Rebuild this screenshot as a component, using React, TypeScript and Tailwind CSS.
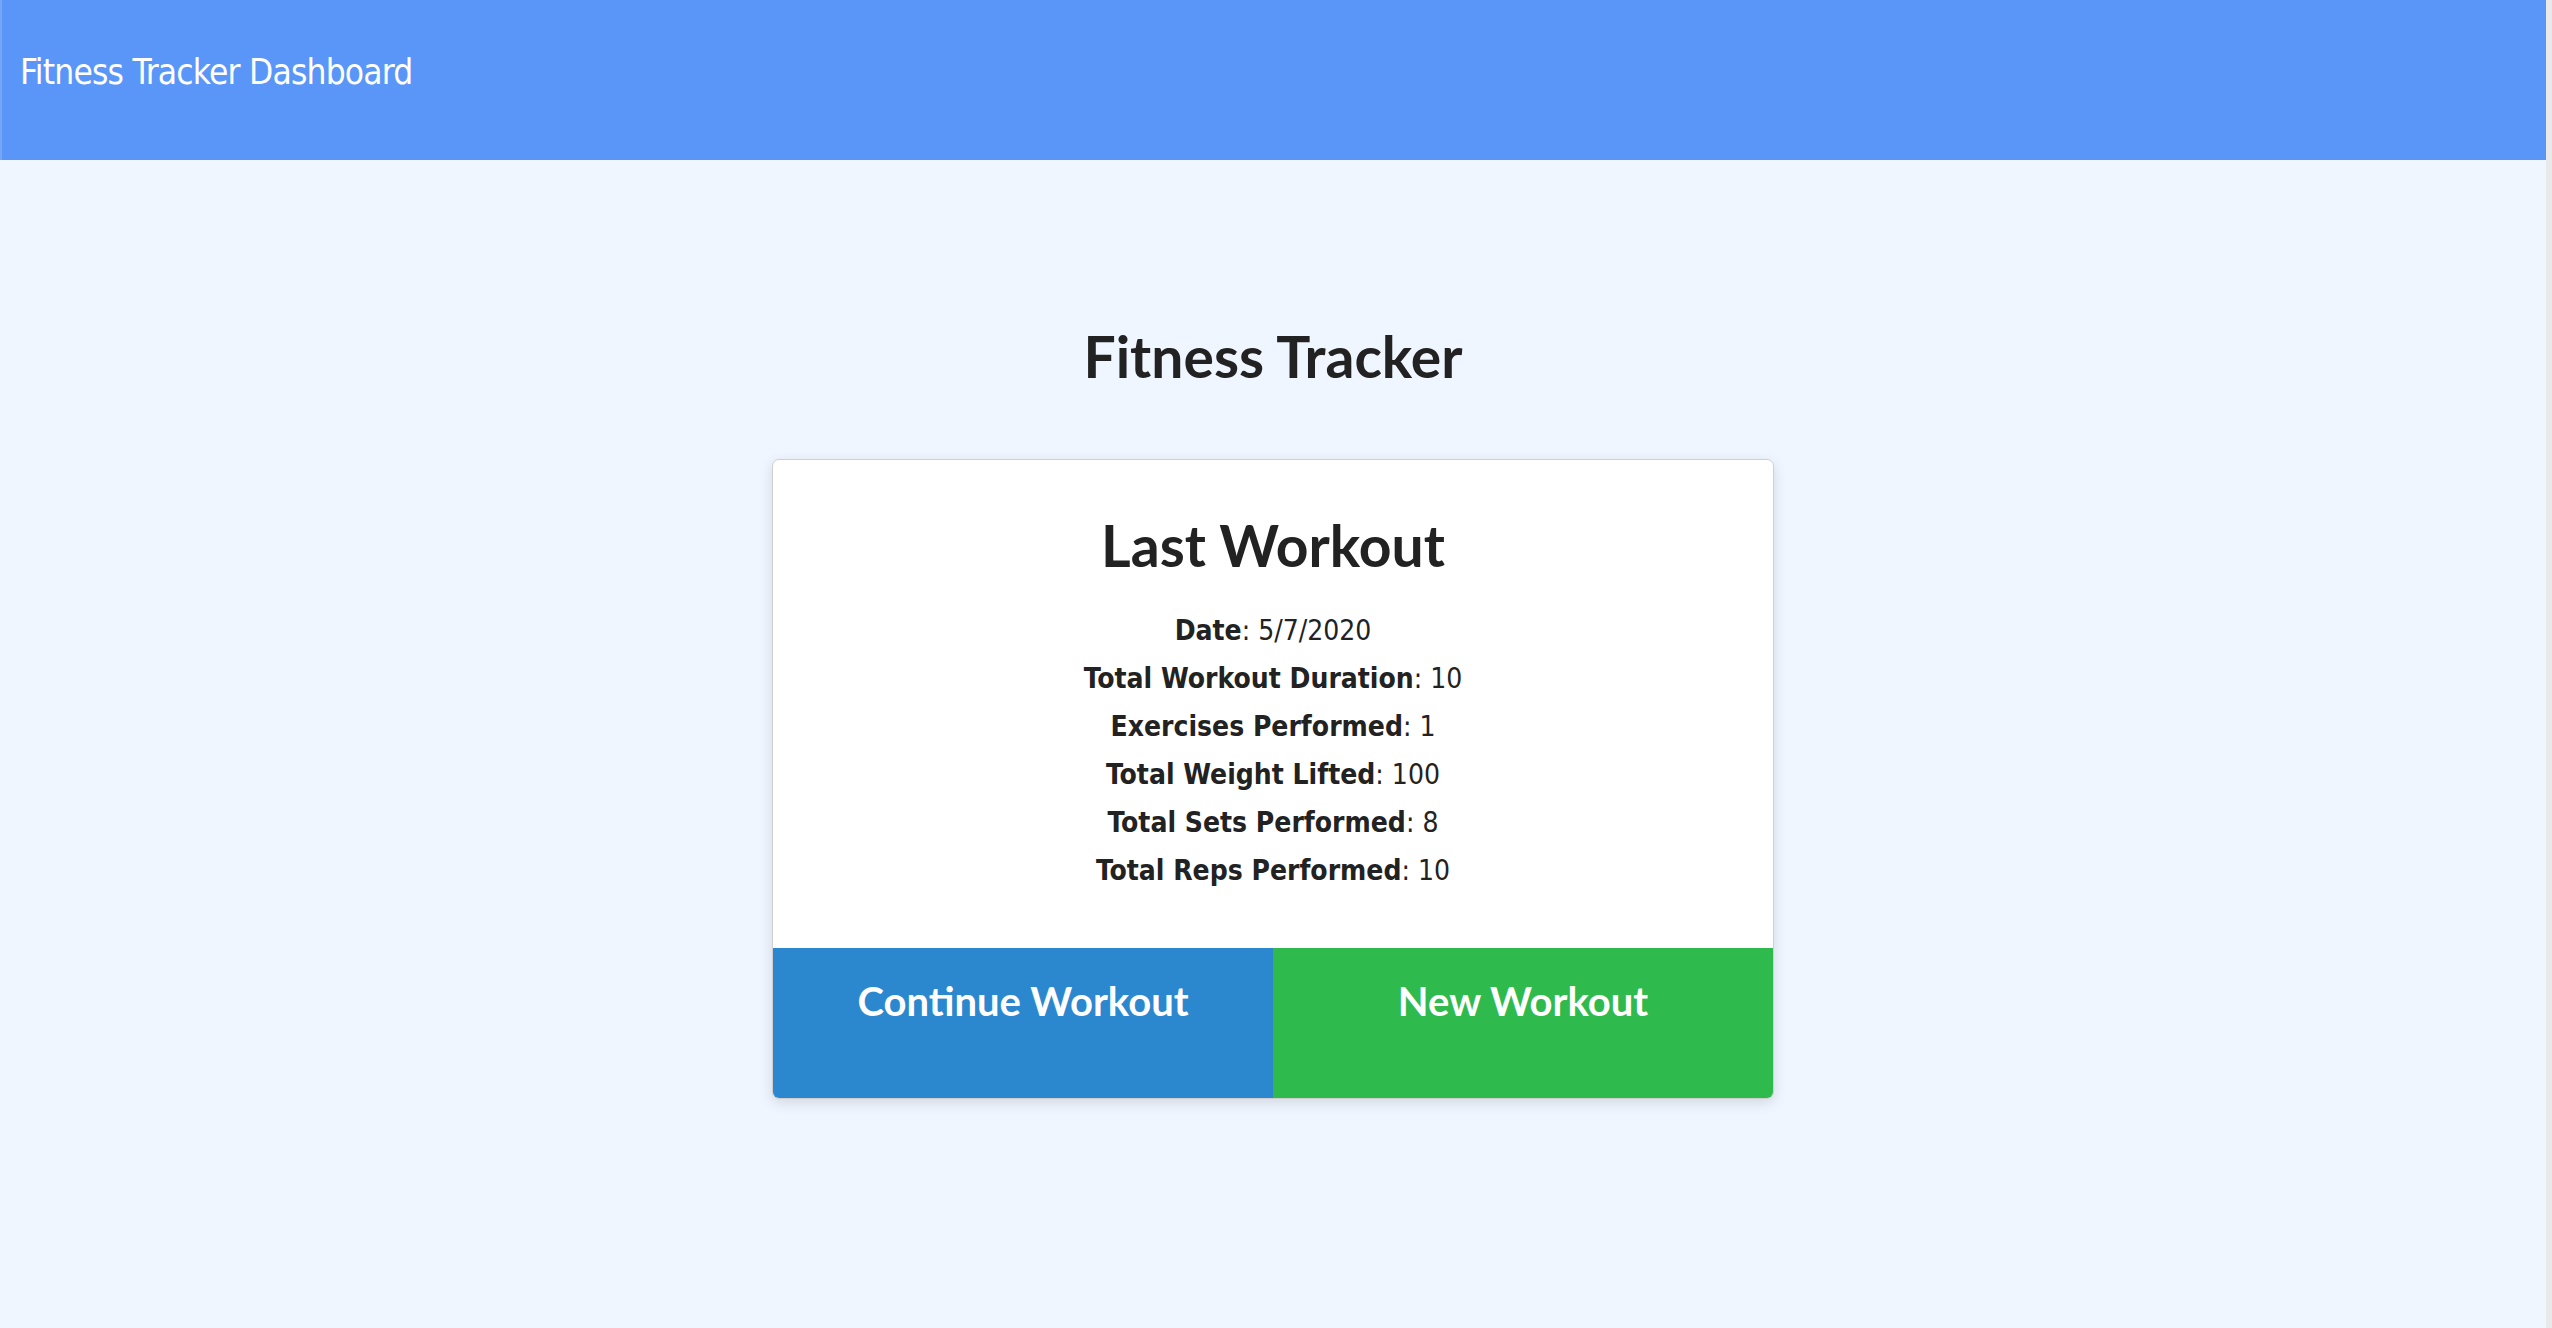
const stats: [string, string][] = [
  ["Date", "5/7/2020"],
  ["Total Workout Duration", "10"],
  ["Exercises Performed", "1"],
  ["Total Weight Lifted", "100"],
  ["Total Sets Performed", "8"],
  ["Total Reps Performed", "10"],
];

const App = () => {
  return (
    <div className="flex min-h-screen w-full bg-[#eff6ff]">
      <div className="flex-1 flex flex-col">
        {/* Top bar */}
        <header className="h-[160px] bg-[#5a96f8] border-l-2 border-[#76a6f6] flex items-center px-[18px] pb-[16px]">
          <span className="text-white text-[35px] tracking-[-0.8px] leading-none font-['DejaVu_Sans_Condensed','DejaVu_Sans',sans-serif]">
            Fitness Tracker Dashboard
          </span>
        </header>

        {/* Main */}
        <main className="flex flex-col items-center pt-[168px] font-['Lato',sans-serif]">
          <h1 className="text-[57px] leading-none font-bold text-[#222]">Fitness Tracker</h1>

          <div className="mt-[74px] w-[1002px] bg-white rounded-[7px] border border-[#d0d0d0] shadow-[0_4px_14px_rgba(0,0,0,0.12)] overflow-hidden">
            <div className="flex flex-col items-center pt-[57px] pb-[63px]">
              <h2 className="text-[57px] leading-none font-bold text-[#222]">Last Workout</h2>
              <div className="mt-[43px] flex flex-col items-center gap-[20px] text-[28px] leading-[28px] text-[#222] font-['DejaVu_Sans_Condensed','DejaVu_Sans',sans-serif]">
                {stats.map(([label, value]) => (
                  <p key={label}>
                    <span className="font-bold">{label}</span>: {value}
                  </p>
                ))}
              </div>
            </div>

            <div className="flex h-[150px]">
              <button className="flex-1 bg-[#2b88cf] text-white text-[40px] font-bold leading-none pt-[33px] flex justify-center items-start">
                Continue Workout
              </button>
              <button className="flex-1 bg-[#2fba4e] text-white text-[40px] font-bold leading-none pt-[33px] flex justify-center items-start">
                New Workout
              </button>
            </div>
          </div>
        </main>
      </div>
      <div className="w-[6px] bg-[#e9e9e9]" />
    </div>
  );
};

export default App;
